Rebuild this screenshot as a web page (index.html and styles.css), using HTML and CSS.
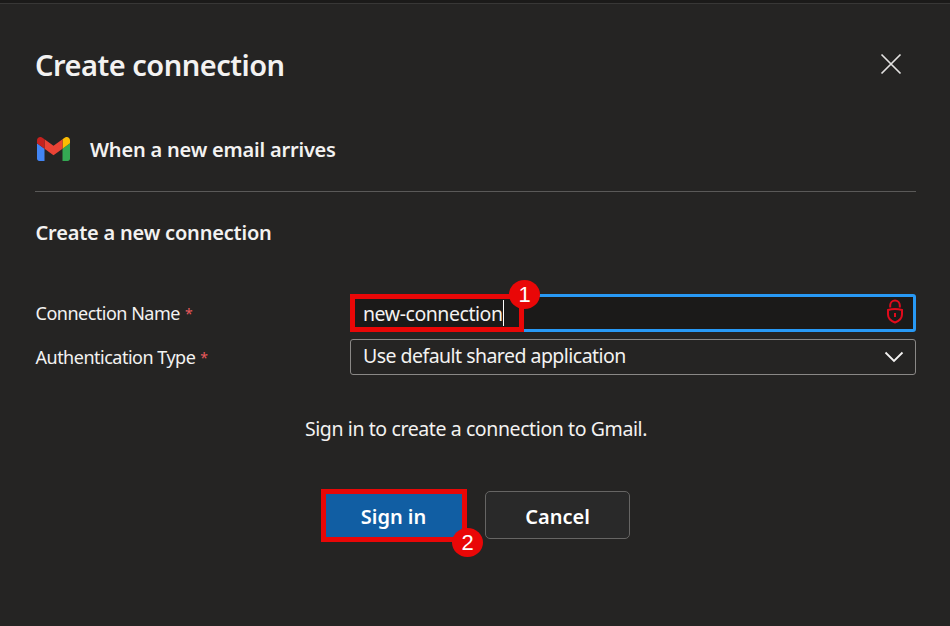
FILE: index.html
```html
<!DOCTYPE html>
<html lang="en">
<head>
<meta charset="utf-8">
<title>Create connection</title>
<link rel="stylesheet" href="styles.css">
</head>
<body>
<main class="panel">
  <header class="panel-header">
    <h1>Create connection</h1>
    <svg class="close" viewBox="0 0 22 22" width="22" height="22"><path d="M1.5 1.5l19 19M20.5 1.5l-19 19"/></svg>
  </header>
  <div class="connector">
    <svg viewBox="52 42 88 66" width="33" height="24" preserveAspectRatio="none">
      <path fill="#4285f4" d="M58 108h14V74L52 59v43c0 3.32 2.69 6 6 6"/>
      <path fill="#34a853" d="M120 108h14c3.32 0 6-2.69 6-6V59l-20 15"/>
      <path fill="#fbbc04" d="M120 48v26l20-15v-8c0-7.42-8.47-11.65-14.4-7.2"/>
      <path fill="#ea4335" d="M72 74V48l24 18 24-18v26L96 92"/>
      <path fill="#c5221f" d="M52 51v8l20 15V48l-5.6-4.2c-5.94-4.45-14.4-.22-14.4 7.2"/>
    </svg>
    <h2>When a new email arrives</h2>
  </div>
  <h3>Create a new connection</h3>
  <form class="fields">
    <div class="label"><span>Connection Name</span><span class="required">*</span></div>
    <div class="input">
      <span class="input-text">new-connection</span><i class="caret"></i>
      <svg class="lock" viewBox="0 0 18 26" width="18" height="26"><path d="M4.2 8.5V6.3a4.8 4.8 0 0 1 9.600 0V8.500M2 11Q9 8.800 16 11v4.500c0 4.200-3.500 6.700-7 8-3.500-1.300-7-3.800-7-8zM9 14v4"/></svg>
      <div class="highlight highlight-name"><b class="badge badge-one">1</b></div>
    </div>
    <div class="label"><span>Authentication Type</span><span class="required">*</span></div>
    <div class="select">
      <span class="select-text">Use default shared application</span>
      <svg class="chevron" viewBox="0 0 20 12" width="20" height="12"><path d="M1.500 1.500L10 10l8.500-8.500"/></svg>
    </div>
  </form>
  <p class="message">Sign in to create a connection to Gmail.</p>
  <div class="actions">
    <div class="button primary"><span>Sign in</span><div class="highlight highlight-sign"><b class="badge badge-two">2</b></div></div>
    <div class="button"><span>Cancel</span></div>
  </div>
</main>
</body>
</html>
```
FILE: styles.css
```css
* { box-sizing: border-box; }
body { margin: 0; background: #252423; color: #f3f2f1; font-family: "Noto Sans", sans-serif; }
h1, h2, h3, p { margin: 0; font-weight: 600; white-space: nowrap; }
svg { display: block; fill: none; }
.panel { height: 626px; padding: 0 34px 0 35px; border-top: 3px solid #1b1a19; box-shadow: inset 0 1px #383736; overflow: hidden; }
.panel-header { display: flex; justify-content: space-between; align-items: center; height: 40px; margin-top: 42px; padding-right: 14px; }
h1 { font-size: 29px; line-height: 40px; letter-spacing: -0.5px; }
.close { stroke: #e3e2e1; stroke-width: 1.7; margin-top: -2px; }
.connector { display: flex; align-items: center; gap: 20px; height: 85px; margin-top: 22px; padding-left: 2px; border-bottom: 1px solid #5a5958; }
h2, h3 { font-size: 20px; line-height: 28px; letter-spacing: -0.2px; }
h2 { padding-top: 2px; }
h3 { margin-top: 27px; padding-left: 0.5px; }
.fields { display: grid; grid-template-columns: 315px 566px; grid-template-rows: 38px 36px; row-gap: 7px; margin-top: 47px; }
.label { display: flex; align-items: center; gap: 5px; padding-left: 0.5px; font-size: 18px; letter-spacing: -0.5px; white-space: nowrap; }
.required { color: #e8595c; font-size: 14px; }
.input, .select { position: relative; display: flex; align-items: center; font-size: 19.5px; letter-spacing: -0.53px; white-space: nowrap; }
.input { padding: 0 9px 0 10px; background: #1b1a19; border: 3px solid #2899f5; border-radius: 3px; letter-spacing: -0.45px; }
.select { padding: 0 11px 0 12px; border: 1px solid #8a8886; border-radius: 3px; }
.select-text { padding-bottom: 3px; }
.caret { width: 1px; height: 26px; background: #fff; }
.lock { margin: -2px 0 0 auto; stroke: #e00b1c; stroke-width: 2; }
.chevron { margin-left: auto; stroke: #f3f2f1; stroke-width: 1.8; }
.highlight { position: absolute; border: 5px solid #e90707; letter-spacing: 0; }
.highlight-name { left: -3px; top: -3px; width: 174px; height: 38px; }
.highlight-sign { left: -1px; top: -3px; width: 146px; height: 53px; }
.badge { position: absolute; display: flex; align-items: center; justify-content: center; width: 31px; height: 29px; border-radius: 50%; background: #e90707; color: #fff; font: 22px "Liberation Sans", sans-serif; }
.badge-one { left: 154px; top: -19px; }
.badge-two { left: 126px; top: 34px; }
.message { margin-top: 40px; padding-left: 1px; text-align: center; font-size: 19.5px; line-height: 28px; font-weight: 400; letter-spacing: -0.4px; }
.actions { display: flex; gap: 19px; margin: 48px 0 0 286px; }
.button { position: relative; display: flex; align-items: center; justify-content: center; width: 145px; height: 48px; padding-top: 3px; border: 1px solid #666564; border-radius: 5px; background: #292929; color: #fff; font-size: 20px; font-weight: 600; }
.primary { background: #115ea3; border-color: #115ea3; }
```
